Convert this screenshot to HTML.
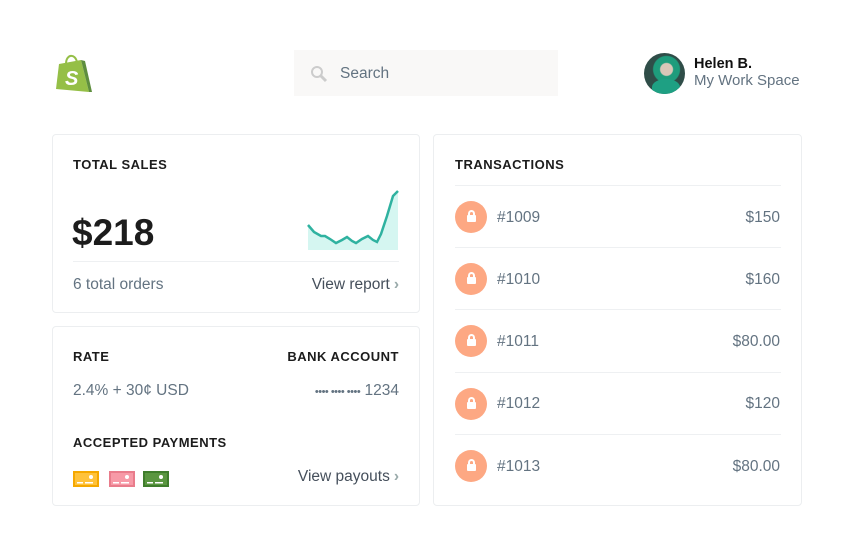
<!DOCTYPE html>
<html><head><style>
*{box-sizing:border-box;margin:0;padding:0}
body{width:846px;height:557px;background:#fff;font-family:"Liberation Sans",sans-serif;position:relative;overflow:hidden;color:#212b36}
.abs{position:absolute}
.card{position:absolute;border:1px solid #eceef0;border-radius:4px;background:#fff}
.h{font-weight:bold;font-size:13px;letter-spacing:0.5px;color:#1c1c1c}
.g{color:#637381;font-size:15.5px}
.sep{position:absolute;height:1px;background:#eef0f2}
.lock{position:absolute;width:32px;height:32px;border-radius:50%;background:#fda883}
.lock i{position:absolute;left:12px;top:14px;width:9px;height:7px;background:#fff;border-radius:1px}
.lock b{position:absolute;left:13px;top:9px;width:7px;height:8px;border:2px solid #fff;border-bottom:none;border-radius:4px 4px 0 0}
.arr{color:#9aa;font-weight:bold;margin-left:4px}
</style></head><body>
<svg class="abs" style="left:55px;top:52px" width="38" height="42" viewBox="0 0 38 42">
<path d="M4 12 L26 8 L34 40 L1 37 Z" fill="#95bf47"/>
<path d="M26 8 L30 9 L37 40 L34 40 Z" fill="#5e8e3e"/>
<path d="M11 12 C11 2 20 1 22 10" stroke="#95bf47" stroke-width="2" fill="none"/>
<text x="10" y="33" font-family="Liberation Sans" font-weight="bold" font-style="italic" font-size="20" fill="#fff">S</text>
</svg>
<div class="abs" style="left:294px;top:50px;width:264px;height:46px;background:#f9f8f7"></div>
<svg class="abs" style="left:310px;top:65px" width="18" height="18"><circle cx="7" cy="7" r="5" stroke="#ccc" stroke-width="2" fill="none"/><path d="M11 11 L16 16" stroke="#ccc" stroke-width="3"/></svg>
<div class="abs g" style="left:340px;top:65px">Search</div>
<div class="abs" style="left:644px;top:53px;width:41px;height:41px;border-radius:50%;background:radial-gradient(circle at 55% 40%,#d9c7b8 0 6px,#1e9c7c 7px 13px,#2f4d48 14px);overflow:hidden"><div style="position:absolute;left:8px;top:26px;width:28px;height:16px;background:#1ea083;border-radius:50% 50% 0 0"></div></div>
<div class="abs" style="left:694px;top:56px;font-weight:bold;font-size:14.5px;color:#111">Helen B.</div>
<div class="abs g" style="left:694px;top:72px;font-size:15px">My Work Space</div>

<div class="card" style="left:52px;top:134px;width:368px;height:179px"></div>
<div class="abs h" style="left:73px;top:157px">TOTAL SALES</div>
<div class="abs" style="left:72px;top:212px;font-size:37px;font-weight:bold;color:#1c1c1c">$218</div>
<svg class="abs" style="left:307px;top:190px" width="93" height="62"><path d="M1 35 L7 42 L14 46 L18 46 L23 49 L29 53 L35 50 L40 47 L45 51 L49 53 L55 49 L61 46 L66 50 L70 52 L74 44 L80 26 L86 6 L91 1 L91 60 L1 60 Z" fill="#d5f6f1"/><path d="M1 35 L7 42 L14 46 L18 46 L23 49 L29 53 L35 50 L40 47 L45 51 L49 53 L55 49 L61 46 L66 50 L70 52 L74 44 L80 26 L86 6 L91 1" stroke="#2fb2a0" stroke-width="2.5" fill="none"/></svg>
<div class="sep" style="left:73px;top:261px;width:326px"></div>
<div class="abs g" style="left:73px;top:276px">6 total orders</div>
<div class="abs g" style="right:447px;top:276px;color:#454f5b">View report<span class="arr">›</span></div>

<div class="card" style="left:52px;top:326px;width:368px;height:180px"></div>
<div class="abs h" style="left:73px;top:349px">RATE</div>
<div class="abs h" style="right:447px;top:349px">BANK ACCOUNT</div>
<div class="abs g" style="left:73px;top:382px">2.4% + 30¢ USD</div>
<div class="abs g" style="right:447px;top:382px"><span style="font-size:11px;letter-spacing:-0.5px">•••• •••• ••••</span> 1234</div>
<div class="abs h" style="left:73px;top:435px">ACCEPTED PAYMENTS</div>
<svg class="abs" style="left:73px;top:471px" width="100" height="18">
<rect x="0" y="0" width="26" height="16" fill="#f5a800"/><rect x="2" y="2" width="22" height="12" fill="#ffc23a"/>
<rect x="36" y="0" width="26" height="16" fill="#e97c8b"/><rect x="38" y="2" width="22" height="12" fill="#f79aa7"/>
<rect x="70" y="0" width="26" height="16" fill="#3f7d2c"/><rect x="72" y="2" width="22" height="12" fill="#5a9640"/>
<g fill="#fff"><circle cx="18" cy="6" r="2"/><rect x="4" y="11" width="6" height="1.5"/><rect x="12" y="11" width="8" height="1.5"/>
<circle cx="54" cy="6" r="2"/><rect x="40" y="11" width="6" height="1.5"/><rect x="48" y="11" width="8" height="1.5"/>
<circle cx="88" cy="6" r="2"/><rect x="74" y="11" width="6" height="1.5"/><rect x="82" y="11" width="8" height="1.5"/></g></svg>
<div class="abs g" style="right:447px;top:468px;color:#454f5b">View payouts<span class="arr">›</span></div>

<div class="card" style="left:433px;top:134px;width:369px;height:372px"></div>
<div class="abs h" style="left:455px;top:157px">TRANSACTIONS</div>
<div class="sep" style="left:455px;top:185px;width:326px"></div>
<div class="lock" style="left:455px;top:201px"><b></b><i></i></div><div class="abs g" style="left:497px;top:209px">#1009</div><div class="abs g" style="right:66px;top:209px">$150</div>
<div class="sep" style="left:455px;top:247px;width:326px"></div>
<div class="lock" style="left:455px;top:263px"><b></b><i></i></div><div class="abs g" style="left:497px;top:271px">#1010</div><div class="abs g" style="right:66px;top:271px">$160</div>
<div class="sep" style="left:455px;top:309px;width:326px"></div>
<div class="lock" style="left:455px;top:325px"><b></b><i></i></div><div class="abs g" style="left:497px;top:333px">#1011</div><div class="abs g" style="right:66px;top:333px">$80.00</div>
<div class="sep" style="left:455px;top:372px;width:326px"></div>
<div class="lock" style="left:455px;top:388px"><b></b><i></i></div><div class="abs g" style="left:497px;top:395px">#1012</div><div class="abs g" style="right:66px;top:395px">$120</div>
<div class="sep" style="left:455px;top:434px;width:326px"></div>
<div class="lock" style="left:455px;top:450px"><b></b><i></i></div><div class="abs g" style="left:497px;top:458px">#1013</div><div class="abs g" style="right:66px;top:458px">$80.00</div>
</body></html>
